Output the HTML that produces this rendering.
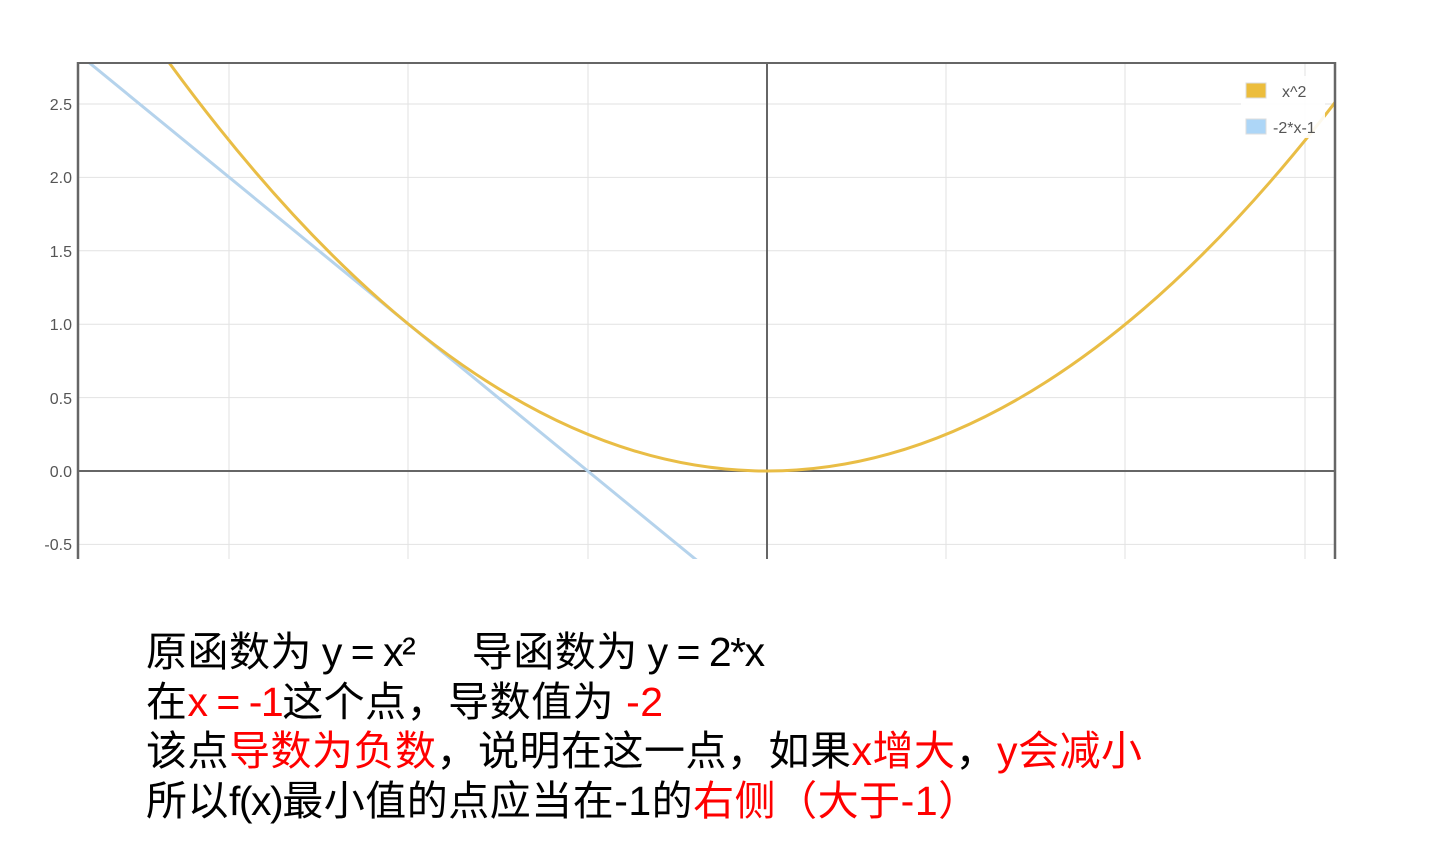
<!DOCTYPE html>
<html><head><meta charset="utf-8"><style>
html,body{margin:0;padding:0;background:#fff;width:1441px;height:841px;overflow:hidden;position:relative}
.t{position:absolute;left:146px;font-family:"Liberation Sans","Noto Sans CJK SC",sans-serif;font-size:41px;line-height:48px;color:#000;white-space:pre;letter-spacing:0.5px}
.r{color:#f00}
.n{letter-spacing:-1.5px}
.ax{font-family:"Liberation Sans",sans-serif;font-size:16px;fill:#555}
</style></head><body>
<svg width="1441" height="600" style="position:absolute;left:0;top:0">
<defs><clipPath id="c"><rect x="79" y="64" width="1256" height="495"/></clipPath></defs>
<g stroke="#e2e2e2" stroke-width="1">
<line x1="79" x2="1335" y1="104" y2="104"/><line x1="79" x2="1335" y1="177.4" y2="177.4"/>
<line x1="79" x2="1335" y1="250.8" y2="250.8"/><line x1="79" x2="1335" y1="324.2" y2="324.2"/>
<line x1="79" x2="1335" y1="397.6" y2="397.6"/><line x1="79" x2="1335" y1="544.4" y2="544.4"/>
<line x1="229" x2="229" y1="64" y2="559"/><line x1="408" x2="408" y1="64" y2="559"/>
<line x1="588" x2="588" y1="64" y2="559"/><line x1="946" x2="946" y1="64" y2="559"/>
<line x1="1125" x2="1125" y1="64" y2="559"/><line x1="1305" x2="1305" y1="64" y2="559"/>
</g>
<line x1="79" x2="1335" y1="471" y2="471" stroke="#666" stroke-width="2"/>
<line x1="767" x2="767" y1="64" y2="559" stroke="#666" stroke-width="2"/>
<g clip-path="url(#c)" fill="none">
<line x1="50" y1="30.6" x2="767" y2="617.8" stroke="#b5d3ec" stroke-width="3"/>
<path d="M169.4 63.1 Q755 862.5 1340.6 95.2" stroke="#e9bd45" stroke-width="3"/>
</g>
<rect x="1241" y="76" width="84" height="62" fill="#fff" opacity="0.9"/>
<rect x="1246" y="83" width="20" height="15" fill="#ecbd3c" stroke="#ddd"/>
<rect x="1246" y="119" width="20" height="15" fill="#add6f7" stroke="#ddd"/>
<text x="1282" y="97" class="ax" font-size="17">x^2</text>
<text x="1273" y="133" class="ax" font-size="17">-2*x-1</text>
<line x1="78" y1="63" x2="1336" y2="63" stroke="#666" stroke-width="2"/>
<line x1="78" y1="62" x2="78" y2="559" stroke="#666" stroke-width="2.5"/>
<line x1="1335" y1="62" x2="1335" y2="559" stroke="#666" stroke-width="2.5"/>
<g class="ax" text-anchor="end">
<text x="72" y="110">2.5</text><text x="72" y="183">2.0</text><text x="72" y="257">1.5</text>
<text x="72" y="330">1.0</text><text x="72" y="404">0.5</text><text x="72" y="477">0.0</text>
<text x="72" y="550">-0.5</text></g>
</svg>
<div class="t" style="top:628px">原函数为<span class="n"> y = x² </span>    导函数为<span class="n"> y = 2*x</span></div>
<div class="t" style="top:678px">在<span class="r n">x = -1</span>这个点，导数值为 <span class="r">-2</span></div>
<div class="t" style="top:727px">该点<span class="r">导数为负数</span>，说明在这一点，如果<span class="r">x增大</span>，<span class="r">y会减小</span></div>
<div class="t" style="top:777px">所以<span class="n">f(x)</span>最小值的点应当在-1的<span class="r">右侧（大于-1）</span></div>
</body></html>
